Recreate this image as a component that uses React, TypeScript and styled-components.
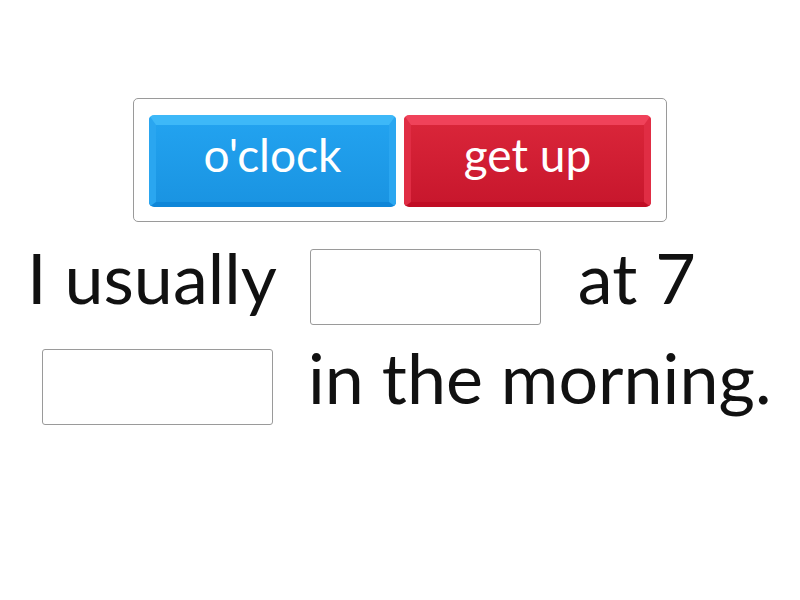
import React from "react";
import styled, { createGlobalStyle } from "styled-components";

const Global = createGlobalStyle`
  html, body { margin: 0; padding: 0; background: #fff; }
  body { font-family: Lato, "Open Sans", sans-serif; }
`;

const Page = styled.div`
  width: 800px;
  height: 600px;
  position: relative;
  overflow: hidden;
  background: #fff;
`;

const Tray = styled.div`
  margin: 98px 0 0 133px;
  width: 534px;
  height: 124px;
  box-sizing: border-box;
  border: 1px solid #9a9a9a;
  border-radius: 5px;
  display: flex;
  gap: 8px;
  padding: 16px 0 0 15px;
`;

const Tile = styled.div<{ $c: "blue" | "red" }>`
  width: 247px;
  height: 92px;
  box-sizing: border-box;
  border-radius: 5px;
  border-style: solid;
  border-width: 10px 7px 5px 7px;
  border-top-color: ${(p) => (p.$c === "blue" ? "#3db8f8" : "#f0425a")};
  border-left-color: ${(p) => (p.$c === "blue" ? "#2aa6f0" : "#e02d44")};
  border-right-color: ${(p) => (p.$c === "blue" ? "#2aa6f0" : "#e02d44")};
  border-bottom-color: ${(p) => (p.$c === "blue" ? "#0f86d8" : "#c00d24")};
  background: ${(p) =>
    p.$c === "blue"
      ? "linear-gradient(#22a2ef, #1a94e2)"
      : "linear-gradient(#d92539, #c8172d)"};
  display: flex;
  align-items: center;
  justify-content: center;
  color: #fff;
  font-size: 46px;
  line-height: 1;
  padding-bottom: 18px;
`;

const Sentence = styled.div`
  margin-top: 27px;
  display: flex;
  flex-direction: column;
  gap: 24px;
`;

const Line = styled.div<{ $indent: number }>`
  display: flex;
  align-items: center;
  padding-left: ${(p) => p.$indent}px;
  height: 76px;
`;

const Word = styled.span<{ $gapL?: number; $gapR?: number }>`
  font-size: 70px;
  color: #111;
  line-height: 1;
  white-space: nowrap;
  margin-left: ${(p) => p.$gapL ?? 0}px;
  margin-right: ${(p) => p.$gapR ?? 0}px;
  position: relative;
  top: -10px;
`;

const Blank = styled.div`
  width: 231px;
  height: 76px;
  box-sizing: border-box;
  border: 1px solid #9a9a9a;
  border-radius: 3px;
  background: #fff;
`;

export default function App() {
  return (
    <Page>
      <Global />
      <Tray>
        <Tile $c="blue">o'clock</Tile>
        <Tile $c="red">get up</Tile>
      </Tray>
      <Sentence>
        <Line $indent={27}>
          <Word $gapR={33}>I usually</Word>
          <Blank />
          <Word $gapL={37}>at 7</Word>
        </Line>
        <Line $indent={42}>
          <Blank />
          <Word $gapL={35}>in the morning.</Word>
        </Line>
      </Sentence>
    </Page>
  );
}
